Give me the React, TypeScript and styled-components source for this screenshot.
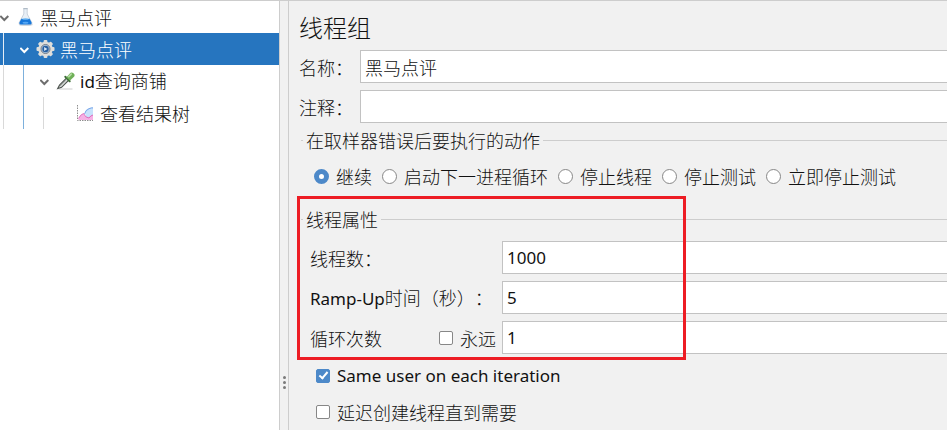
import React, { useState } from "react";
import styled, { createGlobalStyle, css } from "styled-components";

const GlobalStyle = createGlobalStyle`
  *, *::before, *::after { box-sizing: border-box; }
  body {
    margin: 0;
    background: #f1f1f1;
    color: #111;
    font: 300 18px/24px "Noto Sans CJK SC", sans-serif;
    text-spacing-trim: space-all;
  }
  button, input { font: inherit; color: inherit; }
`;

const Window = styled.div`
  display: grid;
  grid-template-columns: 280px 8px minmax(0, 1fr);
  min-height: 100vh;
  border-top: 1px solid #cdcdcd;
  overflow: hidden;
`;

const TreePanel = styled.nav`
  background: #fff;
  border-right: 1px solid #cdcdcd;
`;

const TreeList = styled.ul`
  list-style: none;
  margin: 0;
  padding: 0;
`;

const TreeRow = styled.li<{ $selected: boolean }>`
  display: flex;
  align-items: center;
  height: 32px;
  white-space: nowrap;
  background: ${(p) => (p.$selected ? "#2675bf" : "transparent")};
  color: ${(p) => (p.$selected ? "#fff" : "#111")};
`;

const Guide = styled.span<{ $color: string }>`
  flex: 0 0 17px;
  height: 100%;
  margin-left: 3px;
  border-left: 1px solid ${(p) => p.$color};
`;

const plainButton = css`
  padding: 0;
  border: 0;
  background: none;
  text-align: left;
`;

const Toggle = styled.button`
  ${plainButton}
  flex: 0 0 16px;
  height: 16px;
  svg { display: block; margin-top: 2px; }
`;

const ToggleSpace = styled.span`
  flex: 0 0 16px;
`;

const NodeButton = styled.button`
  ${plainButton}
  display: flex;
  align-items: center;
  gap: 5px;
  svg { flex: none; display: block; }
`;

const Latin = styled.span`
  font-family: "Noto Sans", sans-serif;
  font-size: 17px;
  font-weight: 400;
`;

const Divider = styled.div`
  display: flex;
  flex-direction: column;
  align-items: center;
  justify-content: flex-end;
  gap: 2px;
  padding-bottom: 41px;
`;

const Dot = styled.span`
  width: 3px;
  height: 3px;
  border-radius: 50%;
  background: #7a7a7a;
`;

const Main = styled.main`
  border-left: 1px solid #cdcdcd;
  padding: 10px 0 6px;
`;

const Title = styled.h1`
  margin: 0 0 7px 10px;
  font-size: 24px;
  line-height: 32px;
  font-weight: 300;
`;

const FieldRow = styled.div<{ $labelWidth: number }>`
  display: grid;
  grid-template-columns: ${(p) => p.$labelWidth}px minmax(0, 1fr);
  align-items: center;
  white-space: nowrap;
`;

const HeaderFields = styled.div`
  display: grid;
  gap: 7px;
  padding: 0 0 5px 10px;
`;

const TextField = styled.input<{ $latin?: boolean }>`
  width: 100%;
  height: 33px;
  padding: 0 4px;
  border: 1px solid #c2c2c2;
  border-right: 0;
  border-radius: 0;
  background: #fff;
  outline: none;
  ${(p) => p.$latin && css`
    font-family: "Noto Sans", sans-serif;
    font-weight: 400;
    font-size: 17px;
  `}
`;

const Group = styled.fieldset`
  min-width: 0;
  margin: 0 0 0 12px;
  padding: 0;
  border: 0;
  border-top: 1px solid #cdcdcd;
`;

const Legend = styled.legend`
  margin-left: 2px;
  padding: 0 3px;
  line-height: 24px;
`;

const Radios = styled.div`
  display: flex;
  gap: 10px;
  padding: 12px 0 19px 13px;
  white-space: nowrap;
`;

const Choice = styled.label`
  display: flex;
  align-items: center;
  gap: 7px;
`;

const Radio = styled.input`
  appearance: none;
  flex: none;
  width: 15px;
  height: 15px;
  margin: 0;
  border: 1px solid #878787;
  border-radius: 50%;
  background: #fff;
  &:checked { border: 5px solid #4d89c9; }
`;

const Check = styled.input`
  appearance: none;
  flex: none;
  display: grid;
  place-items: start center;
  width: 14px;
  height: 14px;
  margin: 0;
  border: 1px solid #878787;
  border-radius: 2px;
  background: #fff;
  &:checked { border-color: #4d89c9; background: #4d89c9; }
  &:checked::after {
    content: "";
    width: 5px;
    height: 9px;
    border: solid #fff;
    border-width: 0 2px 2px 0;
    transform: rotate(40deg);
  }
`;

const Marked = styled.section`
  position: relative;
`;

const Highlight = styled.div`
  position: absolute;
  left: 8px;
  top: -11px;
  bottom: -6px;
  width: 389px;
  border: 3px solid #ed1c24;
  pointer-events: none;
`;

const Properties = styled.div`
  display: grid;
  gap: 7px;
  padding: 10px 0 0 9px;
`;

const LoopLabel = styled.div`
  display: flex;
  justify-content: space-between;
  padding-right: 6px;
`;

const Options = styled.div`
  display: flex;
  flex-direction: column;
  align-items: flex-start;
  gap: 12px;
  padding: 10px 0 0 27px;
`;

const Chevron = ({ color }: { color: string }) => (
  <svg width="9" height="9" viewBox="0 0 9 9" fill="none" stroke={color} strokeWidth="2">
    <path d="M0.3 2 4.3 6 8.3 2" />
  </svg>
);

const FlaskIcon = () => (
  <svg width="19" height="18" viewBox="0 0 19 18">
    <ellipse cx="9.8" cy="16.8" rx="7" ry="1" fill="#ccd3dc" />
    <path d="M7.8 .5h3.4V6l4.6 8.6q.6 2.1-1.2 2.2H4.4q-1.8-.1-1.2-2.2L7.8 6z" fill="#e8eff6" stroke="#b4c1ce" strokeWidth=".7" />
    <path d="M5.4 10.7q4.1 1.2 8.2 0l2 3.9q.4 1.7-1 1.8H4.4q-1.4-.1-1-1.8z" fill="#1878db" />
    <path d="M5.3 11q4.2-1.3 8.4 0-4.2 1.5-8.4 0" fill="#65b5f5" />
    <ellipse cx="9.5" cy="14.7" rx="3" ry="1" fill="#56a8f4" />
    <path d="M7.3 .7h4.4" stroke="#aab6c1" />
  </svg>
);

const GearIcon = () => (
  <svg width="19" height="18" viewBox="0 0 18 18">
    <g fill="#dededb">
      {[0, 45, 90, 135].map((a) => (
        <rect key={a} x="7.1" y="0" width="3.8" height="18" rx="1" transform={`rotate(${a} 9 9)`} />
      ))}
      <circle cx="9" cy="9" r="7.3" />
    </g>
    <circle cx="9" cy="9" r="4.5" fill="#a9c7e6" stroke="#747b84" />
    <circle cx="9" cy="9" r="3.2" fill="#285f9f" />
    <path d="M7.6 7 10.9 9l-3.3 2z" fill="#d9e9f7" />
  </svg>
);

const DropperIcon = () => (
  <svg width="19" height="18" viewBox="0 0 18 18">
    <path d="M2 17h14" stroke="#d9d9d9" strokeWidth="1.3" />
    <path d="M1.2 16.5 3 13.2 10 6l2.2 2.2-7.1 7.1z" fill="#e3e6e3" stroke="#4e5450" strokeWidth="1.1" />
    <path d="m3 14.7 6.5-6.5" stroke="#8d9490" strokeWidth="1" />
    <path d="m8.8 4.8 4.4 4.4" stroke="#3e6d38" strokeWidth="2" strokeLinecap="round" />
    <path d="m9.8 5.4 3.5-4Q15-.2 17 1.3t.5 3.4l-4 3.8z" fill="#6fb058" />
    <path d="m12.2 4.6 2.5-2.5" stroke="#b6dda4" strokeWidth="1.6" strokeLinecap="round" />
  </svg>
);

const ChartIcon = () => (
  <svg width="19" height="18" viewBox="0 0 19 18">
    <path d="M9 9q0-3 3-4.5T17 3v13h-6z" fill="#c7e2fc" />
    <path d="M8.5 10q1-4 4.5-5.3T17 4" fill="none" stroke="#7ba6e8" />
    <path d="M2.5 15q2-4 5-5.5 2 4.500 5.500 4.500 1.500-2.500 4-3v5h-14.500z" fill="#f6b0e5" />
    <path d="M2.500 14.500q2-4 5-5 2 4.500 5.500 4.500 1.500-2.500 4-3" fill="none" stroke="#df6cbc" />
    <path d="M1.500 1v15.500H17" fill="none" stroke="#8e8e8e" strokeDasharray="1.500 1" />
  </svg>
);

const nodes = [
  { id: "plan", icon: <FlaskIcon />, latin: "", text: "黑马点评", guides: [], open: true },
  { id: "group", icon: <GearIcon />, latin: "", text: "黑马点评", guides: ["#e4edf6"], open: true },
  { id: "sampler", icon: <DropperIcon />, latin: "id", text: "查询商铺", guides: ["#d9d9d9", "#7db0dc"], open: true },
  { id: "results", icon: <ChartIcon />, latin: "", text: "查看结果树", guides: ["#d9d9d9", "#7db0dc", "#d9d9d9"], open: false },
];

const actions = ["继续", "启动下一进程循环", "停止线程", "停止测试", "立即停止测试"];

export default function App() {
  const [selected, setSelected] = useState("group");
  return (
    <>
      <GlobalStyle />
      <Window>
        <TreePanel>
          <TreeList>
            {nodes.map((n) => (
              <TreeRow key={n.id} $selected={n.id === selected}>
                {n.guides.map((c, i) => <Guide key={i} $color={c} />)}
                {n.open ? (
                  <Toggle aria-label="展开">
                    <Chevron color={n.id === selected ? "#fff" : "#6e6e6e"} />
                  </Toggle>
                ) : <ToggleSpace />}
                <NodeButton onClick={() => setSelected(n.id)}>
                  {n.icon}
                  <span>{n.latin && <Latin>{n.latin}</Latin>}{n.text}</span>
                </NodeButton>
              </TreeRow>
            ))}
          </TreeList>
        </TreePanel>
        <Divider><Dot /><Dot /><Dot /></Divider>
        <Main>
          <Title>线程组</Title>
          <HeaderFields>
            <FieldRow $labelWidth={61}>
              <label htmlFor="name">名称：</label>
              <TextField id="name" defaultValue="黑马点评" />
            </FieldRow>
            <FieldRow $labelWidth={61}>
              <label htmlFor="comment">注释：</label>
              <TextField id="comment" />
            </FieldRow>
          </HeaderFields>
          <Group>
            <Legend>在取样器错误后要执行的动作</Legend>
            <Radios>
              {actions.map((a, i) => (
                <Choice key={a}>
                  <Radio type="radio" name="action" defaultChecked={i === 0} />
                  {a}
                </Choice>
              ))}
            </Radios>
          </Group>
          <Marked>
            <Group>
              <Legend>线程属性</Legend>
              <Properties>
                <FieldRow $labelWidth={192}>
                  <label htmlFor="threads">线程数：</label>
                  <TextField $latin id="threads" defaultValue="1000" />
                </FieldRow>
                <FieldRow $labelWidth={192}>
                  <label htmlFor="ramp"><Latin>Ramp-Up</Latin>时间（秒）：</label>
                  <TextField $latin id="ramp" defaultValue="5" />
                </FieldRow>
                <FieldRow $labelWidth={192}>
                  <LoopLabel>
                    <label htmlFor="loops">循环次数</label>
                    <Choice><Check type="checkbox" />永远</Choice>
                  </LoopLabel>
                  <TextField $latin id="loops" defaultValue="1" />
                </FieldRow>
              </Properties>
            </Group>
            <Highlight />
          </Marked>
          <Options>
            <Choice><Check type="checkbox" defaultChecked /><Latin>Same user on each iteration</Latin></Choice>
            <Choice><Check type="checkbox" />延迟创建线程直到需要</Choice>
          </Options>
        </Main>
      </Window>
    </>
  );
}
